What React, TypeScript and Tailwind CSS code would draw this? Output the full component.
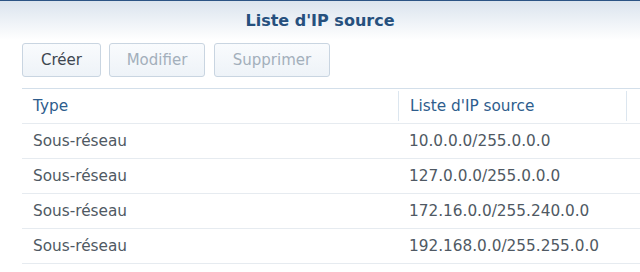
import React from 'react';

const rows = [
  { type: 'Sous-réseau', ip: '10.0.0.0/255.0.0.0' },
  { type: 'Sous-réseau', ip: '127.0.0.0/255.0.0.0' },
  { type: 'Sous-réseau', ip: '172.16.0.0/255.240.0.0' },
  { type: 'Sous-réseau', ip: '192.168.0.0/255.255.0.0' },
];

const Btn: React.FC<{ label: string; width: string; disabled?: boolean }> = ({ label, width, disabled }) => (
  <button
    disabled={disabled}
    className={`${width} h-[34px] rounded-[3px] border border-[#c9d5e1] bg-gradient-to-b from-[#f9fbfd] to-[#eef3f8] text-[15px] ${
      disabled ? 'text-[#a3afbb]' : 'text-[#3d4650]'
    }`}
  >
    {label}
  </button>
);

export default function App() {
  return (
    <div className="w-[640px] h-[272px] overflow-hidden bg-white font-['DejaVu_Sans',sans-serif]">
      {/* title band */}
      <div className="h-[40px] border-t border-[#2c5485] bg-gradient-to-b from-[#dbe4ee] to-white flex items-center justify-center pt-[1px]">
        <span className="text-[16px] font-bold text-[#26507e]">Liste d'IP source</span>
      </div>

      {/* toolbar */}
      <div className="flex pl-[22px] pt-[3px]">
        <Btn label="Créer" width="w-[79px]" />
        <div className="w-[8px]" />
        <Btn label="Modifier" width="w-[96px]" disabled />
        <div className="w-[9px]" />
        <Btn label="Supprimer" width="w-[116px]" disabled />
      </div>

      {/* grid */}
      <div className="ml-[22px] mt-[11px] border-t border-[#d3dfea]">
        <div className="grid grid-cols-[376px_228px_1fr] h-[35px] border-b border-[#e6ebf0] text-[15.3px] text-[#2e5d8d]">
          <div className="flex items-center pl-[11px]">Type</div>
          <div className="flex items-center pl-[11px] border-l border-[#dce6ef] my-[2px]">Liste d'IP source</div>
          <div className="border-l border-[#dce6ef] my-[2px]" />
        </div>
        {rows.map((r) => (
          <div
            key={r.ip}
            className="grid grid-cols-[376px_1fr] h-[35px] border-b border-[#e6ebf0] text-[15.3px] text-[#4f5963]"
          >
            <div className="flex items-center pl-[11px]">{r.type}</div>
            <div className="flex items-center pl-[11px]">{r.ip}</div>
          </div>
        ))}
      </div>
    </div>
  );
}
